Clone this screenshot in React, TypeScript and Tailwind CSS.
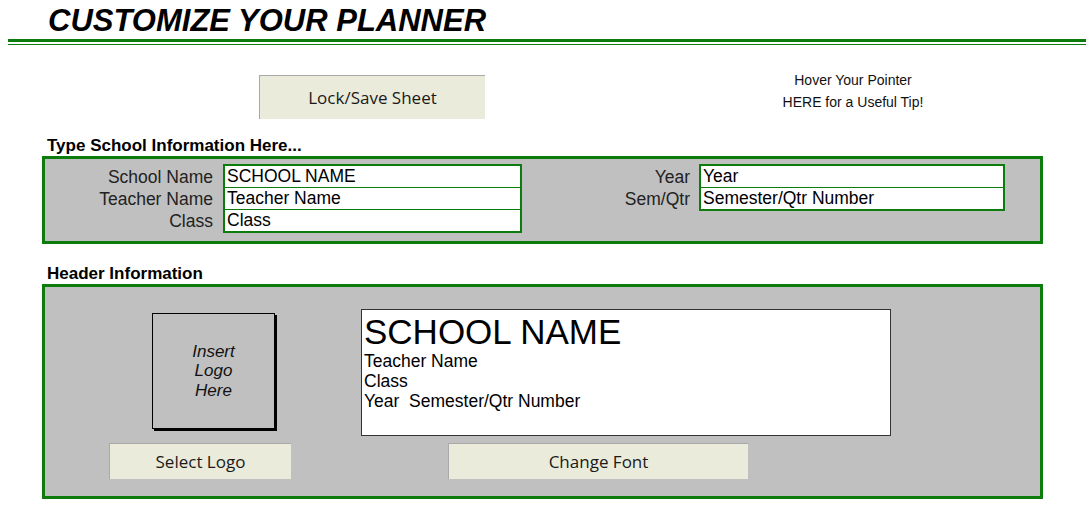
const GREEN = 'bg-[#0c7d0c]';

function SheetButton({ label, className }: { label: string; className: string }) {
  return (
    <div
      className={`flex items-center justify-center bg-[#ebebdc] border-t border-l border-[#a9a9a9] font-['Open_Sans',sans-serif] text-[17px] text-[#1a1a1a] ${className}`}
    >
      {label}
    </div>
  );
}

function FieldGroup({ values, width }: { values: string[]; width: string }) {
  return (
    <div className={`${width} border-2 border-[#0c7d0c] bg-white`}>
      {values.map((v, i) => (
        <div
          key={v}
          className={`px-[2px] leading-[21px] ${i < values.length - 1 ? 'h-[22px] border-b border-[#0c7d0c]' : 'h-[21px]'}`}
        >
          {v}
        </div>
      ))}
    </div>
  );
}

function Labels({ items, width }: { items: string[]; width: string }) {
  return (
    <div className={`${width} pt-[2px] text-right text-[#222]`}>
      {items.map((l) => (
        <div key={l} className="leading-[22px]">
          {l}
        </div>
      ))}
    </div>
  );
}

export default function App() {
  return (
    <div className="w-[1086px] h-[509px] overflow-hidden bg-white text-black text-[17.5px] font-['Liberation_Sans',Arial,sans-serif]">
      {/* Title */}
      <div className="h-[39px] pl-[48px] pt-[2px]">
        <h1 className="text-[31px] leading-[37px] font-bold italic">CUSTOMIZE YOUR PLANNER</h1>
      </div>
      <div className={`ml-[8px] h-[3px] ${GREEN}`} />
      <div className={`ml-[8px] mt-[2px] h-[1px] ${GREEN}`} />

      {/* Lock button + tip */}
      <div className="mt-[24px] flex items-start">
        <SheetButton label="Lock/Save Sheet" className="ml-[259px] mt-[6px] w-[226px] h-[44px]" />
        <div className="ml-[268px] w-[200px] text-center text-[14px] leading-[22px] text-[#111]">
          <div>Hover Your Pointer</div>
          <div>HERE for a Useful Tip!</div>
        </div>
      </div>

      {/* School info */}
      <div className="mt-[17px] pl-[47px] text-[17px] font-bold leading-[20px]">Type School Information Here...</div>
      <div className="ml-[42px] w-[1001px] h-[88px] border-[3px] border-[#0c7d0c] bg-[#c0c0c0] pt-[5px] flex items-start">
        <Labels items={['School Name', 'Teacher Name', 'Class']} width="w-[168px]" />
        <div className="ml-[10px]">
          <FieldGroup values={['SCHOOL NAME', 'Teacher Name', 'Class']} width="w-[299px]" />
        </div>
        <Labels items={['Year', 'Sem/Qtr']} width="w-[168px]" />
        <div className="ml-[9px]">
          <FieldGroup values={['Year', 'Semester/Qtr Number']} width="w-[306px]" />
        </div>
      </div>

      {/* Header info */}
      <div className="mt-[20px] pl-[47px] text-[17px] font-bold leading-[20px]">Header Information</div>
      <div className="ml-[42px] w-[1001px] h-[215px] border-[3px] border-[#0c7d0c] bg-[#c0c0c0] flex items-start">
        <div className="w-[316px] flex flex-col items-start">
          <div className="mt-[26px] ml-[107px] w-[123px] h-[116px] border border-black shadow-[2px_2px_0_#000] flex flex-col items-center justify-center italic text-[17px] leading-[19.5px] text-[#111]">
            <div>Insert</div>
            <div>Logo</div>
            <div>Here</div>
          </div>
          <SheetButton label="Select Logo" className="mt-[14px] ml-[64px] w-[182px] h-[36px]" />
        </div>
        <div className="flex flex-col items-start">
          <div className="mt-[22px] w-[530px] h-[127px] border border-[#333] bg-white pl-[2px]">
            <div className="pt-[3px] text-[35px] leading-[38px]">SCHOOL NAME</div>
            <div className="leading-[20px]">Teacher Name</div>
            <div className="leading-[20px]">Class</div>
            <div className="leading-[20px] whitespace-pre">Year  Semester/Qtr Number</div>
          </div>
          <SheetButton label="Change Font" className="mt-[7px] ml-[87px] w-[300px] h-[36px]" />
        </div>
      </div>
    </div>
  );
}
